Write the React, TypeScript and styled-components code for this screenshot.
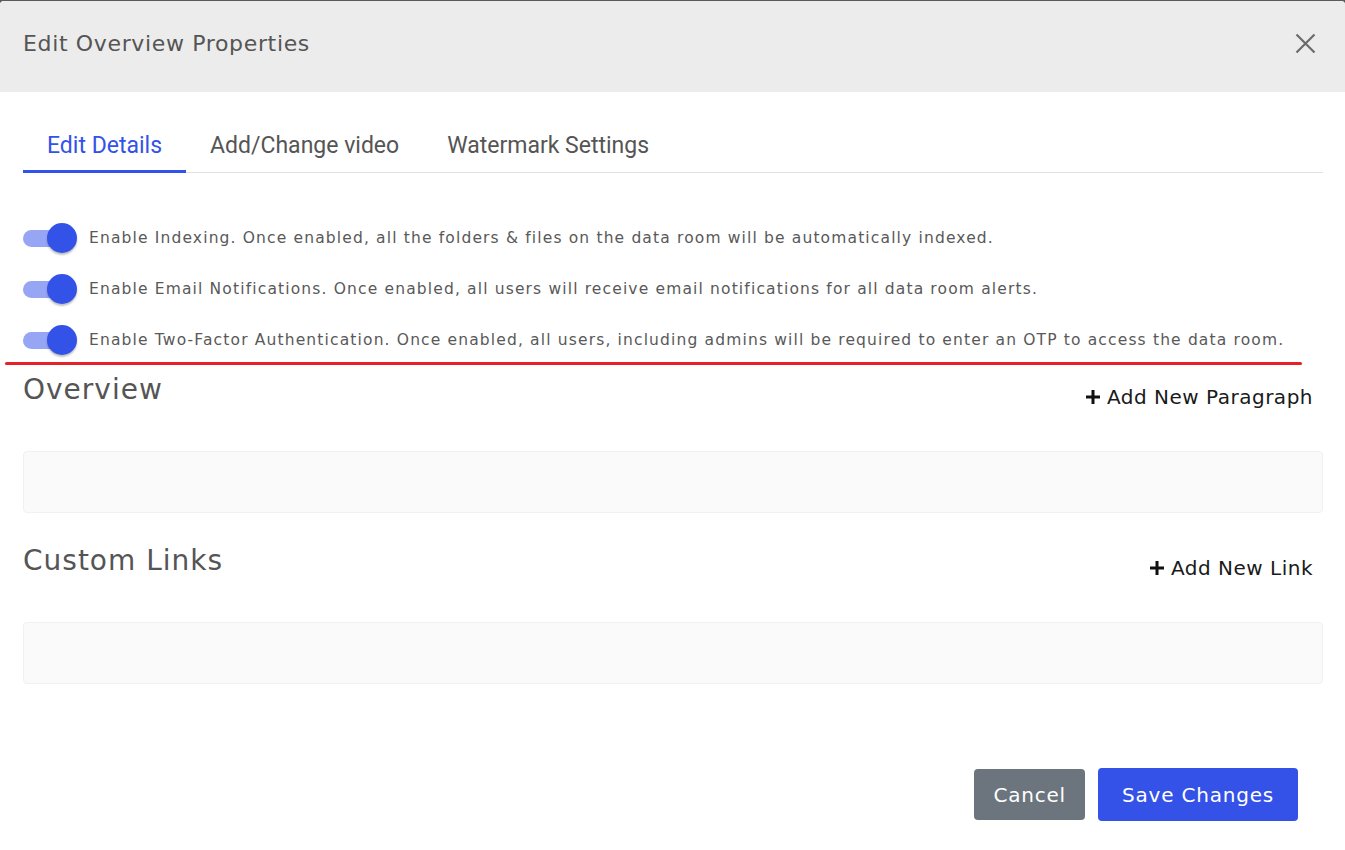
import React, { useState } from "react";
import styled, { createGlobalStyle } from "styled-components";

const GlobalStyle = createGlobalStyle`
  html, body {
    margin: 0;
    padding: 0;
    background: #5a5a5a;
  }
  body {
    font-family: "DejaVu Sans", "Noto Sans", sans-serif;
  }
  * { box-sizing: border-box; }
`;

const Modal = styled.div`
  margin-top: 1px;
  width: 1345px;
  height: 849px;
  background: #fff;
  border-radius: 4px 4px 0 0;
  display: flex;
  flex-direction: column;
  overflow: hidden;
`;

const Header = styled.div`
  height: 91px;
  flex: none;
  background: #ececec;
  display: flex;
  align-items: center;
  justify-content: space-between;
  padding: 0 29px 7px 23px;
`;

const Title = styled.h1`
  margin: 0;
  font-size: 22px;
  font-weight: 400;
  color: #555;
  letter-spacing: 0.65px;
`;

const CloseButton = styled.button`
  border: 0;
  background: none;
  padding: 0;
  width: 22px;
  height: 22px;
  display: flex;
  align-items: center;
  justify-content: center;
  cursor: pointer;
`;

const Body = styled.div`
  padding: 0 22px 0 23px;
  display: flex;
  flex-direction: column;
  flex: 1;
`;

const Tabs = styled.div`
  margin-top: 40px;
  display: flex;
  border-bottom: 1px solid #dee2e6;
  font-family: Roboto, "Liberation Sans", sans-serif;
`;

const Tab = styled.button<{ $active?: boolean }>`
  border: 0;
  background: none;
  font-family: inherit;
  font-size: 23px;
  line-height: 27px;
  padding: 0 24px 11px;
  margin-bottom: -1px;
  color: ${(p) => (p.$active ? "#3352e8" : "#555")};
  border-bottom: 3px solid ${(p) => (p.$active ? "#3352e8" : "transparent")};
  cursor: pointer;
`;

const Toggles = styled.div`
  margin-top: 50px;
  display: flex;
  flex-direction: column;
  gap: 21px;
`;

const ToggleRow = styled.label`
  display: flex;
  align-items: center;
  gap: 12px;
  height: 30px;
  font-size: 15.5px;
  letter-spacing: 1.15px;
  color: #595959;
  cursor: pointer;
  white-space: nowrap;
`;

const Track = styled.span<{ $on: boolean }>`
  position: relative;
  width: 54px;
  height: 30px;
  flex: none;
  display: flex;
  align-items: center;

  &::before {
    content: "";
    width: 46px;
    height: 17px;
    border-radius: 9px;
    background: ${(p) => (p.$on ? "#97a5f5" : "#c8c8c8")};
  }

  &::after {
    content: "";
    position: absolute;
    top: 0;
    left: ${(p) => (p.$on ? "24px" : "0")};
    width: 30px;
    height: 30px;
    border-radius: 50%;
    background: ${(p) => (p.$on ? "#3352e8" : "#f5f5f5")};
    box-shadow: 0 2px 2px rgba(0, 0, 0, 0.25);
  }
`;

const RedRule = styled.div`
  margin: 7px 21px 0 -18px;
  height: 3px;
  border-radius: 2px;
  background: #e5212a;
`;

const SectionHead = styled.div`
  display: flex;
  align-items: flex-start;
  justify-content: space-between;
`;

const SectionTitle = styled.h2`
  margin: 0;
  font-size: 28px;
  line-height: 34px;
  font-weight: 400;
  letter-spacing: 1px;
  color: #555;
`;

const AddLink = styled.button`
  border: 0;
  background: none;
  margin-top: 12px;
  display: flex;
  align-items: center;
  gap: 6px;
  font-family: inherit;
  font-size: 20px;
  line-height: 24px;
  letter-spacing: 0.5px;
  color: #1a1a1a;
  padding: 0 10px 0 0;
  cursor: pointer;
`;

const EmptyBox = styled.div`
  height: 62px;
  background: #fafafa;
  border: 1px solid #f1f1f1;
  border-radius: 4px;
`;

const Section = styled.section<{ $top: number }>`
  margin-top: ${(p) => p.$top}px;
  display: flex;
  flex-direction: column;
  gap: 42px;
`;

const Footer = styled.div`
  margin-top: auto;
  padding: 0 25px 29px 0;
  display: flex;
  justify-content: flex-end;
  gap: 13px;
  align-items: center;
`;

const Button = styled.button<{ $primary?: boolean }>`
  border: 0;
  border-radius: 4px;
  font-family: inherit;
  font-size: 20px;
  letter-spacing: 0.8px;
  color: #fff;
  height: ${(p) => (p.$primary ? "53px" : "51px")};
  padding: 0 ${(p) => (p.$primary ? "24px" : "19px")};
  background: ${(p) => (p.$primary ? "#3452e8" : "#6c757d")};
  cursor: pointer;
`;

const PlusIcon = () => (
  <svg width="16" height="16" viewBox="0 0 16 16">
    <path d="M6.5 1h3v5.5H15v3H9.5V15h-3V9.5H1v-3h5.5z" fill="#111" />
  </svg>
);

const CloseIcon = () => (
  <svg width="21" height="21" viewBox="0 0 21 21">
    <path d="M1.5 1.5L19.5 19.5M19.5 1.5L1.5 19.5" stroke="#6b6b6b" strokeWidth="2.2" />
  </svg>
);

const toggleTexts = [
  "Enable Indexing. Once enabled, all the folders & files on the data room will be automatically indexed.",
  "Enable Email Notifications. Once enabled, all users will receive email notifications for all data room alerts.",
  "Enable Two-Factor Authentication. Once enabled, all users, including admins will be required to enter an OTP to access the data room.",
];

export default function App() {
  const [on, setOn] = useState([true, true, true]);
  const [tab, setTab] = useState(0);

  return (
    <>
      <GlobalStyle />
      <Modal>
        <Header>
          <Title>Edit Overview Properties</Title>
          <CloseButton aria-label="Close">
            <CloseIcon />
          </CloseButton>
        </Header>
        <Body>
          <Tabs>
            {["Edit Details", "Add/Change video", "Watermark Settings"].map((t, i) => (
              <Tab key={t} $active={tab === i} onClick={() => setTab(i)}>
                {t}
              </Tab>
            ))}
          </Tabs>
          <Toggles>
            {toggleTexts.map((text, i) => (
              <ToggleRow key={i} onClick={() => setOn(on.map((v, j) => (j === i ? !v : v)))}>
                <Track $on={on[i]} />
                {text}
              </ToggleRow>
            ))}
          </Toggles>
          <RedRule />
          <Section $top={8}>
            <SectionHead>
              <SectionTitle>Overview</SectionTitle>
              <AddLink>
                <PlusIcon />
                Add New Paragraph
              </AddLink>
            </SectionHead>
            <EmptyBox />
          </Section>
          <Section $top={31}>
            <SectionHead>
              <SectionTitle>Custom Links</SectionTitle>
              <AddLink>
                <PlusIcon />
                Add New Link
              </AddLink>
            </SectionHead>
            <EmptyBox />
          </Section>
          <Footer>
            <Button>Cancel</Button>
            <Button $primary>Save Changes</Button>
          </Footer>
        </Body>
      </Modal>
    </>
  );
}
